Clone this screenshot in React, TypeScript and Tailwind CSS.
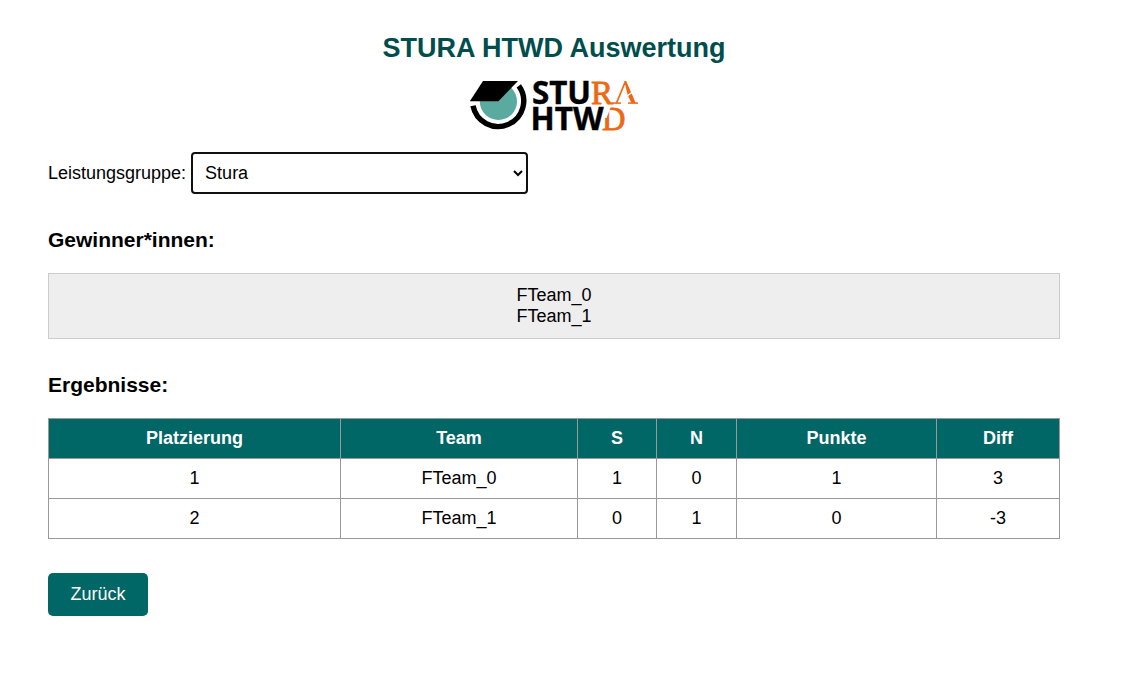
const columns = ['Platzierung', 'Team', 'S', 'N', 'Punkte', 'Diff'];

const results = [
  ['1', 'FTeam_0', '1', '0', '1', '3'],
  ['2', 'FTeam_1', '0', '1', '0', '-3'],
];

function Logo() {
  return (
    <svg width="190" height="70" viewBox="-1 0 190 70" role="img" aria-label="STURA HTWD">
      {/* Open ring around the head */}
      <path
        d="M13 35.8 A25.6 25.6 0 1 0 58.8 15.8"
        fill="none"
        stroke="#000"
        strokeWidth="5.4"
      />
      <circle cx="38.4" cy="31.4" r="18.6" fill="#5aaaa0" />
      {/* Mortarboard */}
      <path d="M23 11H58L38.4 31.2H9.8z" fill="#000" />
      <g className="font-['Liberation_Serif',serif]" fill="#ee6711" stroke="#ee6711" strokeWidth="0.8">
        <text x="131" y="33.6" fontSize="34.5" textLength="22" lengthAdjust="spacingAndGlyphs">R</text>
        <text x="142" y="59.6" fontSize="33" textLength="23.5" lengthAdjust="spacingAndGlyphs">D</text>
      </g>
      <path d="M140 35H151.5L146.5 48H140z" fill="#fff" />
      {/* Stencil-cut A */}
      <g fill="none" stroke="#ee6711">
        <path d="M156.5 33L165 12.5" strokeWidth="1.7" />
        <path d="M151.5 33.1H161" strokeWidth="1.5" />
        <path d="M168 33.1H178" strokeWidth="1.5" />
      </g>
      <g fill="#ee6711">
        <path d="M164.2 11H166.2L171 22.2L167.6 24.8z" />
        <path d="M168.2 26L171.7 23.4L175.6 33H171.4z" />
      </g>
      <g className="font-['Noto_Sans',sans-serif] font-bold" fill="#000" stroke="#000" strokeWidth="0.4" fontSize="31.5">
        <text x="72" y="33.8" textLength="59" lengthAdjust="spacingAndGlyphs">STU</text>
        <text x="70.6" y="59.8" textLength="73" lengthAdjust="spacingAndGlyphs">HTW</text>
      </g>
    </svg>
  );
}

export default function App() {
  return (
    <main className="w-[1060px] bg-white pt-[33px] pl-12 font-['Liberation_Sans',Arial,sans-serif] text-[18px] leading-[21px] text-black">
      <h1 className="text-center text-[27px] leading-[31px] font-bold text-[#004d4d]">STURA HTWD Auswertung</h1>
      <div className="mt-1.5 flex justify-center">
        <Logo />
      </div>
      <div className="mt-3 flex items-center">
        <label htmlFor="gruppe">Leistungsgruppe:</label>
        <select
          id="gruppe"
          className="ml-[5px] h-[42px] w-[337px] rounded-[4px] border-2 border-[#101010] bg-white px-2 text-[18px]"
        >
          <option>Stura</option>
        </select>
      </div>
      <h2 className="mt-[34px] text-[21px] leading-6 font-bold">Gewinner*innen:</h2>
      <div className="mt-[21px] h-[66px] border border-[#ccc] bg-[#eee] pt-[11px] text-center">
        <p>FTeam_0</p>
        <p>FTeam_1</p>
      </div>
      <h2 className="mt-[34px] text-[21px] leading-6 font-bold">Ergebnisse:</h2>
      <table className="mt-[21px] w-full table-fixed border-collapse text-center">
        <colgroup>
          <col className="w-[292px]" />
          <col className="w-[237px]" />
          <col className="w-[79px]" />
          <col className="w-[80px]" />
          <col className="w-[200px]" />
          <col className="w-[123px]" />
        </colgroup>
        <thead>
          <tr className="h-10 bg-[#006666] text-white">
            {columns.map((c) => (
              <th key={c} className="border border-[#999] p-0 font-bold">{c}</th>
            ))}
          </tr>
        </thead>
        <tbody>
          {results.map((row) => (
            <tr key={row[0]} className="h-10">
              {row.map((cell, i) => (
                <td key={columns[i]} className="border border-[#999] p-0">{cell}</td>
              ))}
            </tr>
          ))}
        </tbody>
      </table>
      <button className="mt-[34px] h-[43px] w-[100px] rounded-[5px] bg-[#006666] text-[18px] text-white">Zurück</button>
    </main>
  );
}
